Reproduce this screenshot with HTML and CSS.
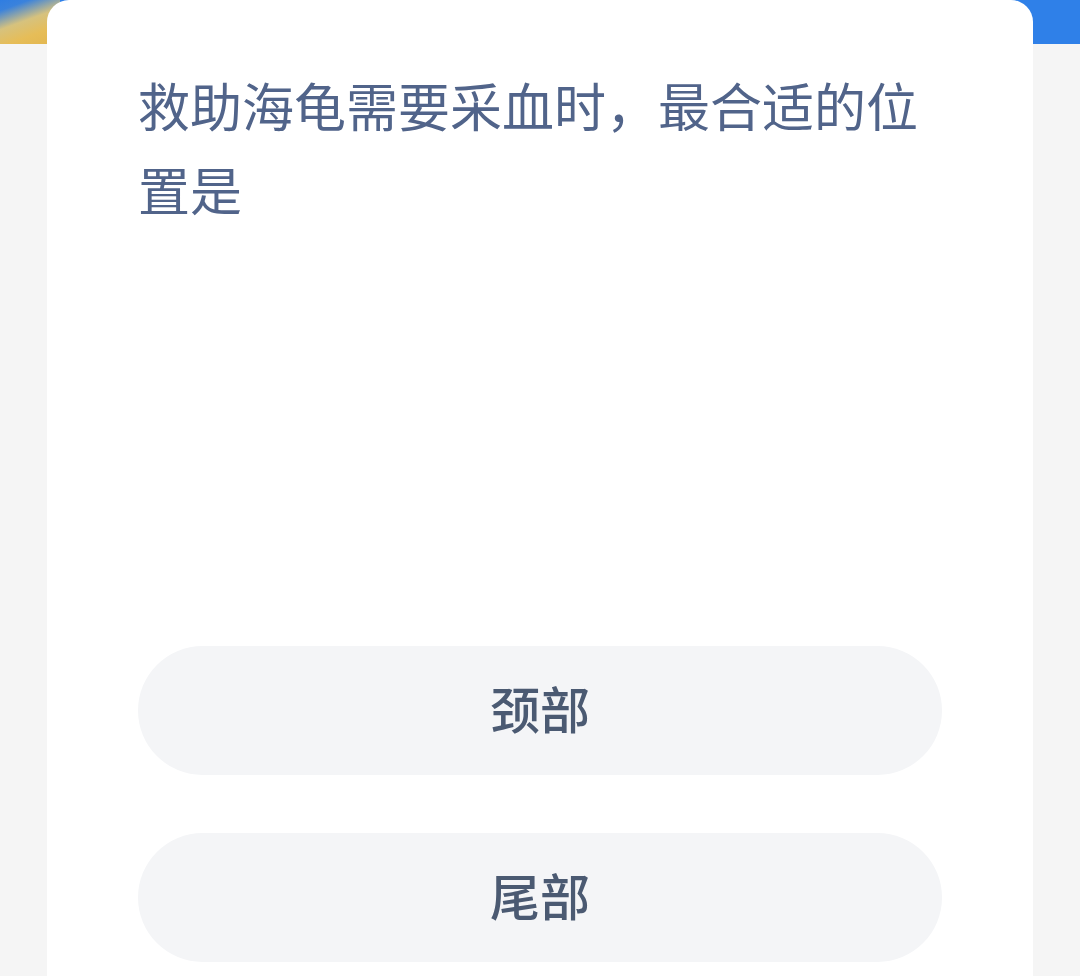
FILE: index.html
```html
<!DOCTYPE html>
<html lang="zh-CN">
<head>
    <meta charset="UTF-8">
    <meta name="viewport" content="width=device-width, initial-scale=1.0">
    <title>答题</title>
    <link rel="stylesheet" href="styles.css">
</head>
<body>
    <div class="top-banner"></div>

    <div class="card">
        <div class="question">救助海龟需要采血时，最合适的位置是</div>

        <div class="options">
            <button class="option">颈部</button>
            <button class="option">尾部</button>
        </div>
    </div>
</body>
</html>
```

FILE: styles.css
```css
html, body {
    margin: 0;
    padding: 0;
}
body {
    font-family: "Noto Sans CJK SC", "Noto Sans", sans-serif;
    background-color: #f5f5f5;
    height: 976px;
    overflow: hidden;
}
.top-banner {
    height: 44px;
    background-color: #2f80e8;
    background-image: linear-gradient(160deg, #2f7de2 0px, #3a82dc 10px, #d6c27e 28px, #e6bd58 44px, #e0b24a 70px);
    background-size: 60px 44px;
    background-repeat: no-repeat;
}
.card {
    margin: -44px 47px 0;
    min-height: 976px;
    box-sizing: border-box;
    background-color: #fff;
    border-radius: 22px 22px 0 0;
    padding: 63px 91px 0;
}
.question {
    font-size: 52px;
    line-height: 84px;
    color: #51648a;
    min-height: 583px;
}
.options {
    display: flex;
    flex-direction: column;
    gap: 58px;
}
.option {
    display: block;
    width: 100%;
    height: 129px;
    padding: 0 0 8px;
    border: none;
    border-radius: 65px;
    background-color: #f4f5f7;
    font-family: inherit;
    font-size: 50px;
    font-weight: 500;
    color: #4b5a72;
    cursor: pointer;
}
```
